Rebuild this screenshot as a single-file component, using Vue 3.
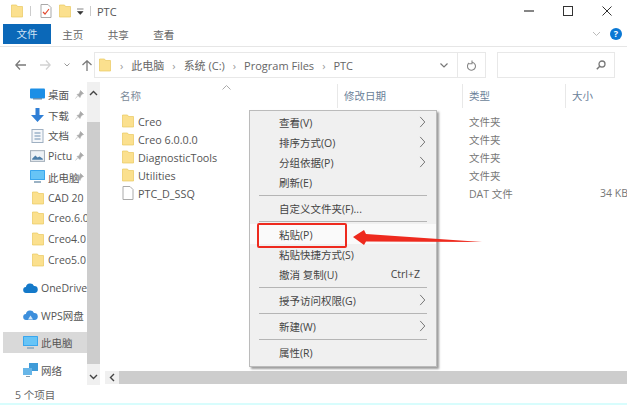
<script setup>
const pinned = [
  { name: '桌面', icon: 'desk', pin: true },
  { name: '下载', icon: 'down', pin: true },
  { name: '文档', icon: 'doc', pin: true },
  { name: 'Pictu', icon: 'pic', pin: true },
  { name: '此电脑', icon: 'pc', pin: true },
  { name: 'CAD 20', icon: 'folder' },
  { name: 'Creo.6.0', icon: 'folder' },
  { name: 'Creo4.0', icon: 'folder' },
  { name: 'Creo5.0', icon: 'folder' },
]

const places = [
  { name: 'OneDrive', icon: 'cloud' },
  { name: 'WPS网盘', icon: 'wps' },
  { name: '此电脑', icon: 'pc', active: true },
  { name: '网络', icon: 'net' },
]

const files = [
  { name: 'Creo', type: '文件夹', icon: 'folder' },
  { name: 'Creo 6.0.0.0', type: '文件夹', icon: 'folder' },
  { name: 'DiagnosticTools', type: '文件夹', icon: 'folder' },
  { name: 'Utilities', type: '文件夹', icon: 'folder' },
  { name: 'PTC_D_SSQ', type: 'DAT 文件', icon: 'file', size: '34 KB' },
]

const menu = [
  { label: '查看(V)', arrow: true },
  { label: '排序方式(O)', arrow: true },
  { label: '分组依据(P)', arrow: true },
  { label: '刷新(E)', sep: true },
  { label: '自定义文件夹(F)...', sep: true },
  { label: '粘贴(P)', hot: true },
  { label: '粘贴快捷方式(S)' },
  { label: '撤消 复制(U)', key: 'Ctrl+Z', sep: true },
  { label: '授予访问权限(G)', arrow: true, sep: true },
  { label: '新建(W)', arrow: true, sep: true },
  { label: '属性(R)' },
]
</script>

<template>
  <div class="win">
    <svg class="defs" width="0" height="0">
      <symbol id="folder" viewBox="0 0 12 14">
        <path d="M.5 1h5l1 1.5h5V13H.5z" fill="#fbe08e" stroke="#e9c85f" stroke-width=".7" />
      </symbol>
      <symbol id="file" viewBox="0 0 12 14">
        <path d="M1 .5h7l3 3v10H1z" fill="#fff" stroke="#aaa" />
      </symbol>
      <symbol id="desk" viewBox="0 0 15 11">
        <rect width="15" height="10" rx="1" fill="#1c8fe6" />
        <rect x="3" y="9.5" width="9" height="1.5" fill="#6a8fb0" />
      </symbol>
      <symbol id="down" viewBox="0 0 14 14">
        <path d="M5 0h4v7h4.500L7 14 .5 7H5z" fill="#2f7fd6" />
      </symbol>
      <symbol id="doc" viewBox="0 0 12 14">
        <rect x=".5" y=".5" width="11" height="13" fill="#f5f7fa" stroke="#9fb0c2" />
        <path d="M3 4h6M3 7h6M3 10h6" stroke="#6e8fb0" />
      </symbol>
      <symbol id="pic" viewBox="0 0 14 11">
        <rect x=".5" y=".5" width="13" height="10" fill="#eef2f6" stroke="#a5b0bb" />
        <path d="M2 8l3-3 2 2 2-1 3 2v1H2z" fill="#4d7ea8" />
      </symbol>
      <symbol id="pc" viewBox="0 0 15 14">
        <rect width="15" height="10" rx=".6" fill="#39a6ee" />
        <rect x="1" y="1" width="13" height="8" fill="#67c4f6" />
        <path d="M4 12h7" stroke="#9bb2c4" stroke-width="2" />
      </symbol>
      <symbol id="cloud" viewBox="0 0 15 10">
        <path d="M3.500 10a3 3 0 0 1-.6-6A4.300 4.300 0 0 1 11 3a3.500 3.500 0 0 1 .5 7z" fill="#1479c9" />
      </symbol>
      <symbol id="wps" viewBox="0 0 15 11">
        <path d="M3.500 10.500a3 3 0 0 1-.6-6A4.300 4.300 0 0 1 11 3.500a3.500 3.500 0 0 1 .5 7z" fill="#3d8fdc" />
        <path d="M5 10l2.500-4L10 10z" fill="#d5e7f8" />
      </symbol>
      <symbol id="net" viewBox="0 0 15 14">
        <rect x="6" y="0" width="9" height="8" fill="#3f9bd8" />
        <rect x="0" y="5" width="9" height="7" fill="#68b6e8" />
        <path d="M3 13.500h4" stroke="#8a9aa8" />
      </symbol>
      <symbol id="pin" viewBox="0 0 9 9">
        <path d="M5.500.5l3 3-1.500.5-1.500 2-.5 1.500-3-3L4 4l1-2zM2.500 6L.5 8.500" fill="#a9a9a9" stroke="#a9a9a9" stroke-width=".6" />
      </symbol>
      <symbol id="chev" viewBox="0 0 7 13">
        <path d="M1 1l5 5.500L1 12" fill="none" stroke="#6d6d6d" />
      </symbol>
    </svg>

    <header class="titlebar">
      <svg class="qa first"><use href="#folder" /></svg>
      <i class="qa-sep"></i>
      <svg class="qa check" viewBox="0 0 12 14" width="12" height="14">
        <path d="M1 .5h7l3 3v10H1z" fill="#fff" stroke="#a9a9a9" />
        <path d="M3 8l2 2 4-5" fill="none" stroke="#e2492f" stroke-width="1.200" />
      </svg>
      <svg class="qa"><use href="#folder" /></svg>
      <svg class="qa-drop" viewBox="0 0 7 7" width="7" height="7">
        <path d="M0 1h6.500M.5 3.500h5.500L3.250 6.500z" fill="#333" stroke="#333" stroke-width=".6" />
      </svg>
      <i class="qa-sep wide"></i>
      <span class="wintitle">PTC</span>
      <div class="wincontrols">
        <svg width="10" height="10" viewBox="0 0 10 10"><path d="M0 5h10" stroke="#222" stroke-width="1.100" /></svg>
        <svg width="10" height="10" viewBox="0 0 10 10"><rect x=".5" y=".5" width="9" height="9" fill="none" stroke="#333" /></svg>
        <svg width="10" height="10" viewBox="0 0 10 10"><path d="M.5.500l9 9M9.500.500l-9 9" stroke="#333" /></svg>
      </div>
    </header>

    <nav class="ribbon">
      <span class="tab file">文件</span>
      <span class="tab">主页</span>
      <span class="tab">共享</span>
      <span class="tab">查看</span>
      <svg class="collapse" width="9" height="6" viewBox="0 0 9 6"><path d="M1 1l3.500 3.500L8 1" fill="none" stroke="#bbb" /></svg>
      <span class="help">?</span>
    </nav>

    <div class="addr-row">
      <div class="nav-btns">
        <svg width="11" height="10" viewBox="0 0 11 10"><path d="M5 .5L.8 5 5 9.500M1 5h10" fill="none" stroke="#7a7a7a" stroke-width="1.300" /></svg>
        <svg width="11" height="10" viewBox="0 0 11 10"><path d="M6 .5L10.200 5 6 9.500M10 5H0" fill="none" stroke="#d2d2d2" stroke-width="1.300" /></svg>
        <svg width="6" height="4" viewBox="0 0 6 4"><path d="M.5.500l2.500 2.500L5.500.500" fill="none" stroke="#999" /></svg>
        <svg width="10" height="11" viewBox="0 0 10 11"><path d="M.5 5L5 .8 9.500 5M5 1v10" fill="none" stroke="#7a7a7a" stroke-width="1.300" /></svg>
      </div>
      <div class="addr">
        <svg class="addr-folder"><use href="#folder" /></svg>
        <span class="crumb-arrow">›</span><span>此电脑</span>
        <span class="crumb-arrow">›</span><span>系统 (C:)</span>
        <span class="crumb-arrow">›</span><span>Program Files</span>
        <span class="crumb-arrow">›</span><span>PTC</span>
        <svg class="addr-drop" width="8" height="5" viewBox="0 0 8 5"><path d="M.5.500L4 4 7.500.500" fill="none" stroke="#777" stroke-width="1.200" /></svg>
        <span class="refresh">
          <svg width="10" height="11" viewBox="0 0 10 11"><path d="M2 3a4 4 0 1 0 3-.8M5 .5v3.200H2" fill="none" stroke="#888" stroke-width="1.100" /></svg>
        </span>
      </div>
      <div class="search">
        <svg width="10" height="10" viewBox="0 0 10 10"><circle cx="6" cy="4" r="3" fill="none" stroke="#777" stroke-width="1.300" /><path d="M4 6L.8 9.200" stroke="#777" stroke-width="1.500" /></svg>
      </div>
    </div>

    <main class="body">
      <aside class="side">
        <ul class="tree">
          <li v-for="item in pinned" :key="item.name">
            <svg class="tree-icon" :class="item.icon"><use :href="'#' + item.icon" /></svg>
            <span class="tree-name">{{ item.name }}</span>
            <svg v-if="item.pin" class="pin"><use href="#pin" /></svg>
          </li>
        </ul>
        <ul class="places">
          <li v-for="item in places" :key="item.name" :class="{ active: item.active }">
            <svg class="place-icon"><use :href="'#' + item.icon" /></svg>
            <span class="tree-name">{{ item.name }}</span>
          </li>
        </ul>
      </aside>

      <div class="vscroll">
        <svg width="9" height="6" viewBox="0 0 9 6"><path d="M1 5l3.500-3.500L8 5" fill="none" stroke="#444" stroke-width="1.400" /></svg>
        <div class="vthumb"></div>
        <svg width="9" height="6" viewBox="0 0 9 6"><path d="M1 1l3.500 3.500L8 1" fill="none" stroke="#444" stroke-width="1.400" /></svg>
      </div>

      <section class="list">
        <div class="cols head">
          <span>名称</span>
          <span>修改日期</span>
          <span>类型</span>
          <span>大小</span>
          <svg class="sort" width="9" height="5" viewBox="0 0 9 5"><path d="M.5 4.500l4-4 4 4" fill="none" stroke="#aaa" /></svg>
        </div>
        <div class="rows">
          <div v-for="f in files" :key="f.name" class="cols row">
            <span class="fname">
              <svg class="ficon"><use :href="'#' + f.icon" /></svg>{{ f.name }}
            </span>
            <span></span>
            <span>{{ f.type }}</span>
            <span class="fsize">{{ f.size }}</span>
          </div>
        </div>
        <div class="hscroll">
          <svg width="6" height="9" viewBox="0 0 6 9"><path d="M5 1L1.500 4.500 5 8" fill="none" stroke="#444" stroke-width="1.400" /></svg>
          <div class="hthumb"></div>
        </div>
      </section>
    </main>

    <footer class="status">5 个项目</footer>

    <div class="menu">
      <template v-for="m in menu" :key="m.label">
        <div class="menu-item" :class="{ hot: m.hot }">
          <span>{{ m.label }}</span>
          <span v-if="m.key" class="menu-key">{{ m.key }}</span>
          <svg v-if="m.arrow" class="menu-arrow"><use href="#chev" /></svg>
        </div>
        <div v-if="m.sep" class="menu-sep"></div>
      </template>
    </div>

    <div class="callout"></div>
    <svg class="arrow" width="140" height="24" viewBox="0 0 140 24">
      <path d="M3 10L14 3l2 4 116 8-116-.5-2 3.500z" fill="#ee2a1e" />
    </svg>
  </div>
</template>

<style>
html,
body {
  margin: 0;
  background: #fff;
}
</style>

<style scoped>
.win {
  position: relative;
  width: 627px;
  height: 405px;
  overflow: hidden;
  display: flex;
  flex-direction: column;
  background: #fff;
  color: #555;
  font-family: "Open Sans", "Noto Sans CJK SC", sans-serif;
  font-size: 10.500px;
  border-bottom: 2px solid #d8fdfd;
  box-sizing: border-box;
}

.defs {
  position: absolute;
}

svg {
  display: block;
  flex: none;
}

.titlebar {
  height: 22px;
  display: flex;
  align-items: center;
  padding-left: 11px;
  flex: none;
}

.qa {
  width: 12px;
  height: 14px;
}

.qa-sep {
  width: 1px;
  height: 10px;
  background: #ccc;
  margin: 0 9px 0 7px;
}

.qa.check {
  margin-right: 7px;
}

.qa-drop {
  margin-left: 6px;
}

.qa-sep.wide {
  margin: 0 6px;
}

.wintitle {
  color: #555;
  font-size: 11px;
}

.wincontrols {
  margin-left: auto;
  margin-right: 15px;
  display: flex;
  gap: 29px;
}

.ribbon {
  height: 20px;
  margin-top: 2px;
  padding-left: 3px;
  padding-right: 5px;
  display: flex;
  align-items: center;
  flex: none;
  border-bottom: 1px solid #e6e6e6;
  padding-bottom: 2px;
  position: relative;
}

.tab {
  width: 45.500px;
  text-align: center;
  color: #666;
}

.tab.file {
  width: 48px;
  height: 20px;
  line-height: 20px;
  background: #0b68b8;
  color: #cfe3f5;
  margin-right: -1px;
}

.collapse {
  margin-left: auto;
  margin-right: 9px;
}

.help {
  width: 12px;
  height: 12px;
  border-radius: 50%;
  background: #0a78d4;
  color: #fff;
  font-size: 9px;
  font-weight: 700;
  line-height: 12px;
  text-align: center;
}

.addr-row {
  height: 26px;
  margin-top: 5px;
  display: flex;
  align-items: stretch;
  flex: none;
}

.nav-btns {
  width: 94px;
  padding-left: 15px;
  box-sizing: border-box;
  display: flex;
  align-items: center;
  gap: 14px;
}

.nav-btns svg:nth-child(3) {
  margin: 0 -2px 0 -1px;
}

.addr {
  width: 392px;
  box-sizing: border-box;
  display: flex;
  align-items: center;
  gap: 8px;
  border: 1px solid #e8e8e8;
  padding-left: 4px;
  color: #666;
  font-size: 11px;
}

.addr-folder {
  width: 12px;
  height: 14px;
  margin-right: 1px;
}

.crumb-arrow {
  color: #999;
  font-size: 11px;
}

.addr-drop {
  margin-left: auto;
  margin-right: 1px;
}

.refresh {
  width: 27px;
  align-self: stretch;
  display: flex;
  align-items: center;
  justify-content: center;
  border-left: 1px solid #e8e8e8;
}

.search {
  width: 118px;
  margin-left: 11px;
  box-sizing: border-box;
  border: 1px solid #e8e8e8;
  display: flex;
  align-items: center;
  justify-content: flex-end;
  padding-right: 8px;
}

.body {
  flex: 1;
  min-height: 0;
  display: flex;
  margin-top: 4px;
}

.side {
  width: 87px;
  flex: none;
  overflow: hidden;
  padding-top: 2px;
}

ul {
  list-style: none;
  margin: 0;
  padding: 0;
}

.tree li {
  height: 20.700px;
  display: flex;
  align-items: center;
  position: relative;
  white-space: nowrap;
}

.tree-icon {
  width: 15px;
  height: 14px;
  margin-left: 30px;
  margin-right: 3px;
}

.tree-icon.folder {
  width: 12px;
  margin-left: 32px;
  margin-right: 4px;
}

.tree-name {
  color: #555;
}

.pin {
  position: absolute;
  left: 75px;
  top: 6px;
  width: 9px;
  height: 9px;
}

.places {
  margin-top: 7px;
}

.places li {
  height: 21px;
  margin-bottom: 6.500px;
  display: flex;
  align-items: center;
  margin-left: 3px;
  white-space: nowrap;
}

.places li.active {
  background: #d9d9d9;
}

.place-icon {
  width: 15px;
  height: 14px;
  margin-left: 20px;
  margin-right: 3px;
}

.vscroll {
  width: 13px;
  flex: none;
  background: #f0f0f0;
  display: flex;
  flex-direction: column;
  align-items: center;
  padding-top: 8px;
  padding-bottom: 5px;
  box-sizing: border-box;
}

.vthumb {
  flex: 1;
  width: 13px;
  background: #cdcdcd;
  margin: 26px 0 10px;
}

.list {
  flex: 1;
  min-width: 0;
  display: flex;
  flex-direction: column;
}

.cols {
  display: grid;
  grid-template-columns: 238px 125px 103px 61px;
  position: relative;
}

.head {
  height: 24px;
  margin-top: 2px;
  color: #6b7f99;
  align-items: center;
}

.head span {
  padding-left: 6px;
  height: 100%;
  line-height: 24px;
  border-right: 1px solid #e8e8e8;
  box-sizing: border-box;
}

.head span:first-child {
  padding-left: 20px;
  color: #7c8a99;
}

.head span:last-of-type {
  border-right: none;
}

.sort {
  position: absolute;
  left: 122px;
  top: 1px;
}

.rows {
  flex: 1;
  padding-top: 4px;
}

.row {
  height: 18px;
  align-items: center;
  white-space: nowrap;
}

.row > span:nth-child(3) {
  padding-left: 6px;
  color: #777;
}

.fname {
  display: flex;
  align-items: center;
  padding-left: 22px;
  gap: 4px;
  color: #555;
  font-size: 10.800px;
}

.ficon {
  width: 12px;
  height: 14px;
}

.fsize {
  color: #777;
  padding-left: 34px;
}

.hscroll {
  height: 13px;
  margin-left: 5px;
  background: #f0f0f0;
  display: flex;
  align-items: center;
  padding-left: 4px;
  margin-bottom: 1px;
  flex: none;
}

.hthumb {
  flex: 1;
  align-self: stretch;
  margin-left: 4px;
  background: #cdcdcd;
}

.status {
  height: 18px;
  flex: none;
  line-height: 20px;
  padding-left: 15px;
  color: #666;
}

.menu {
  position: absolute;
  left: 249px;
  top: 110px;
  width: 188px;
  box-sizing: border-box;
  padding-top: 1px;
  padding-bottom: 4px;
  background: #f0f0f0;
  border: 1px solid #bbb;
  box-shadow: 2px 2px 2px rgba(90, 90, 90, 0.6);
  color: #444;
  font-size: 10.500px;
}

.menu-item {
  height: 20px;
  display: flex;
  align-items: center;
  padding-left: 29px;
  position: relative;
}

.menu-item.hot {
  background: #fafafa;
}

.menu-key {
  position: absolute;
  right: 16px;
}

.menu-arrow {
  position: absolute;
  right: 10px;
  top: 4px;
  width: 7px;
  height: 12px;
}

.menu-sep {
  height: 1px;
  background: #b5b5b5;
  margin: 3px 9px 2px;
}

.callout {
  position: absolute;
  left: 257px;
  top: 223px;
  width: 90px;
  height: 25px;
  box-sizing: border-box;
  border: 2px solid #ee2a1e;
  border-radius: 2px;
}

.arrow {
  position: absolute;
  left: 350px;
  top: 227px;
}
</style>
